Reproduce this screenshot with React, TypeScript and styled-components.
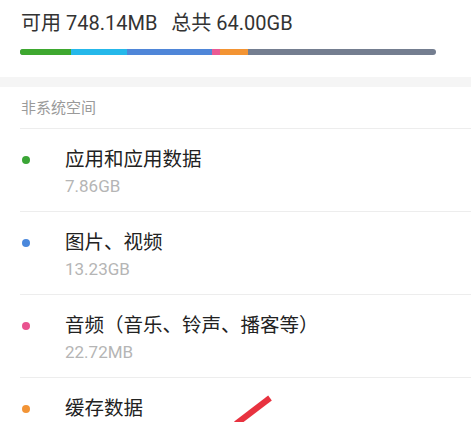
import React from "react";
import styled, { createGlobalStyle } from "styled-components";

const GlobalStyle = createGlobalStyle`
  html, body { margin: 0; padding: 0; background: #ffffff; }
  body { font-family: Roboto, "Noto Sans CJK SC", sans-serif; overflow: hidden; }
`;

const Page = styled.div`
  position: relative;
  width: 471px;
  height: 422px;
  overflow: hidden;
  background: #ffffff;
`;

const Summary = styled.div`
  padding: 11px 35px 22px 20px;
`;

const Totals = styled.div`
  display: flex;
  gap: 14px;
  font-size: 20px;
  line-height: 25px;
  color: #333333;
  padding-left: 1px;
`;

const UsageBar = styled.div`
  display: flex;
  height: 6px;
  margin-top: 13px;
  border-radius: 3px;
  overflow: hidden;
  background: #747e90;
`;

const Segment = styled.div<{ $color: string }>`
  background: ${(p) => p.$color};
  height: 100%;
`;

const SectionGap = styled.div`
  height: 10px;
  background: #f5f5f5;
`;

const SectionLabel = styled.div`
  padding: 11px 20px 10px 21px;
  font-size: 15px;
  line-height: 20px;
  color: #9a9a9a;
`;

const List = styled.div`
  padding-left: 20px;
`;

const Row = styled.div`
  display: grid;
  grid-template-columns: 45px 1fr;
  grid-template-rows: 24px 20px;
  row-gap: 4px;
  padding: 19px 0 15px 0;
  border-top: 1px solid #ededed;
`;

const Dot = styled.span<{ $color: string }>`
  align-self: center;
  justify-self: start;
  margin-left: 2px;
  width: 8px;
  height: 8px;
  border-radius: 50%;
  background: ${(p) => p.$color};
`;

const Title = styled.div`
  font-size: 19.5px;
  line-height: 24px;
  color: #222222;
`;

const Size = styled.div`
  grid-column: 2;
  font-size: 17px;
  line-height: 20px;
  color: #b5b5b5;
`;

const Annotation = styled.svg`
  position: absolute;
  left: 230px;
  top: 392px;
`;

const segments = [
  { color: "#3ea82f", width: 51 },
  { color: "#25b8ea", width: 56 },
  { color: "#4f86d8", width: 85 },
  { color: "#ea5a93", width: 8 },
  { color: "#f39433", width: 28 },
];

const items = [
  { color: "#3aa535", title: "应用和应用数据", size: "7.86GB" },
  { color: "#4a88dc", title: "图片、视频", size: "13.23GB" },
  { color: "#e9538f", title: "音频（音乐、铃声、播客等）", size: "22.72MB" },
  { color: "#f29436", title: "缓存数据", size: "" },
];

export default function App() {
  return (
    <Page>
      <GlobalStyle />
      <Summary>
        <Totals>
          <span>可用 748.14MB</span>
          <span>总共 64.00GB</span>
        </Totals>
        <UsageBar>
          {segments.map((s, i) => (
            <Segment key={i} $color={s.color} style={{ width: s.width }} />
          ))}
        </UsageBar>
      </Summary>
      <SectionGap />
      <SectionLabel>非系统空间</SectionLabel>
      <List>
        {items.map((it) => (
          <Row key={it.title}>
            <Dot $color={it.color} />
            <Title>{it.title}</Title>
            <Size>{it.size}</Size>
          </Row>
        ))}
      </List>
      <Annotation width="50" height="34" viewBox="0 0 50 34">
        <line x1="40" y1="6" x2="6" y2="32" stroke="#e8323f" strokeWidth="6" />
      </Annotation>
    </Page>
  );
}
